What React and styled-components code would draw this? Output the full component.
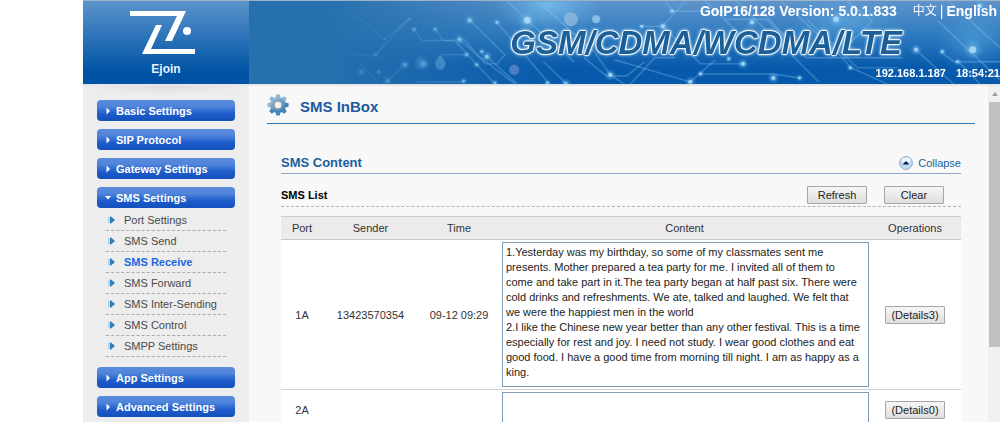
import React, {useState} from "react"
import styled, {createGlobalStyle, css} from 'styled-components';


const menu = [
    {name: 'Basic Settings'},
    {name: 'SIP Protocol'},
    {name: 'Gateway Settings'},
    {
        name: 'SMS Settings',
        items: ['Port Settings', 'SMS Send', 'SMS Receive', 'SMS Forward', 'SMS Inter-Sending', 'SMS Control', 'SMPP Settings']
    },
    {name: 'App Settings'},
    {name: 'Advanced Settings'},
]

const inbox = [
    {
        port: '1A',
        sender: '13423570354',
        time: '09-12 09:29',
        count: 3,
        content: '1.Yesterday was my birthday, so some of my classmates sent me presents. Mother prepared a tea party for me. I invited all of them to come and take part in it.The tea party began at half past six. There were cold drinks and refreshments. We ate, talked and laughed. We felt that we were the happiest men in the world\n2.I like the Chinese new year better than any other festival. This is a time especially for rest and joy. I need not study. I wear good clothes and eat good food. I have a good time from morning till night. I am as happy as a king.'
    },
    {port: '2A', sender: '', time: '', count: 0, content: ''},
]

// circuit lines of the banner
const traces = [
    'M110 10 L143 38 L168 17', 'M134 53 L143 43', 'M110 53 L134 53 L168 17',
    'M172 28 L180 39 L212 39 L252 82', 'M193 28 L201 39 L212 39', 'M217 38 L234 53 L272 82',
    'M227 19 L262 53 L254 62 L242 62 L222 38', 'M254 21 L306 82', 'M264 0 L284 19 L330 60',
    'M294 0 L350 50 L366 73 L380 82', 'M244 55 L274 82 M300 60 L323 82', 'M200 53 L224 53', 'M175 80 L222 80',
    'M145 80 L162 63', 'M118 62 L136 80', 'M340 56 L362 74 L382 74 L400 60', 'M396 25 L418 25 L440 0',
    'M420 0 L428 10 L480 10', 'M370 58 L445 80 L470 58', 'M418 25 L455 62 L500 62', 'M454 72 L527 72 L553 76',
    'M460 0 L497 36 L530 36', 'M490 0 L540 48 L572 80', 'M515 10 L560 56 L655 56', 'M480 18 L520 18 L550 46',
    'M535 0 L590 50 L604 66 L640 82', 'M600 0 L625 20 L600 44', 'M560 18 L610 66 L650 66', 'M668 48 L705 82',
    'M692 50 L706 60 L751 60', 'M690 20 L751 78', 'M700 0 L751 46', 'M710 60 L731 82', 'M386 82 L410 56 L430 56',
]

const nodes = [
    [134, 53, 2], [168, 18, 1], [143, 38, 1], [172, 28, 2], [193, 28, 2], [217, 38, 3], [227, 19, 3], [254, 21, 2],
    [284, 19, 5], [224, 53, 2], [234, 63, 2], [244, 55, 3], [239, 50, 2], [163, 63, 3], [181, 62, 4], [120, 70, 3],
    [146, 79, 3], [137, 70, 2], [221, 79, 2], [252, 81, 2], [304, 81, 2], [322, 82, 3], [366, 73, 3], [397, 25, 2],
    [418, 25, 3], [427, 10, 2], [445, 80, 3], [455, 72, 2], [497, 62, 3], [527, 76, 3], [553, 76, 2], [506, 21, 3],
    [589, 18, 4], [603, 66, 2], [668, 48, 3], [694, 50, 2], [724, 48, 5], [709, 60, 2], [731, 5, 3], [483, 57, 2],
]

const Circuit = () => (
    <CircuitSvg viewBox="0 0 751 82" preserveAspectRatio="xMaxYMid slice" aria-hidden="true">
        <defs>
            <linearGradient id="fade" x1="0" x2="1" y1="0" y2="0">
                <stop offset="0.1" stopColor="#fff" stopOpacity="0"/>
                <stop offset="0.36" stopColor="#fff" stopOpacity="1"/>
            </linearGradient>
            <mask id="fadeMask"><rect width="751" height="82" fill="url(#fade)"/></mask>
            <radialGradient id="glow">
                <stop offset="0" stopColor="#7fc9f5" stopOpacity="0.7"/>
                <stop offset="1" stopColor="#5fb4ea" stopOpacity="0"/>
            </radialGradient>
        </defs>
        <g mask="url(#fadeMask)">
            <ellipse cx="305" cy="4" rx="56" ry="30" fill="url(#glow)"/>
            <ellipse cx="600" cy="20" rx="60" ry="28" fill="url(#glow)" opacity="0.5"/>
            <ellipse cx="724" cy="40" rx="40" ry="34" fill="url(#glow)" opacity="0.5"/>
            <g fill="none" stroke="#8cc8f2" strokeOpacity="0.38" strokeWidth="1.4">
                {traces.map(d => <path key={d} d={d}/>)}
            </g>
            {nodes.map(([x, y, r]) => <g key={`${x}-${y}`}>
                <circle cx={x} cy={y} r={r * 2} fill="url(#glow)"/>
                <circle cx={x} cy={y} r={r * 0.7} fill="#b9e2fb" fillOpacity="0.75"/>
            </g>)}
            <circle cx="327" cy="18" r="7" fill="#a9cbe8" fillOpacity="0.55"/>
            <circle cx="352" cy="18" r="4" fill="#a9d5f2" fillOpacity="0.7"/>
            <path d="M198 52 C200 57 204 59 203 63 A5 5 0 0 1 193 63 C192 59 196 57 198 52Z" fill="#6fb0e4" fillOpacity="0.7"/>
            <path d="M178 52 C180 57 184 59 183 63 A5 5 0 0 1 173 63 C172 59 176 57 178 52Z" fill="#5fa2dc" fillOpacity="0.4"/>
            <circle cx="271" cy="68" r="5" fill="#8f9fdc" fillOpacity="0.5"/>
        </g>
    </CircuitSvg>
)

const Logo = () => (
    <svg width="72" height="46" viewBox="0 0 72 46" aria-hidden="true">
        <g fill="#fff">
            <path d="M0 1H56L42 31H35L47 6H0Z"/>
            <path d="M26 15H32L21 39H65V44H12Z"/>
            <circle cx="57" cy="21" r="4"/>
        </g>
    </svg>
)

const Gear = () => (
    <svg width="22" height="22" viewBox="0 0 22 22" aria-hidden="true">
        <defs>
            <linearGradient id="gear" x1="0" x2="0.6" y1="0" y2="1">
                <stop offset="0" stopColor="#a9c8de"/>
                <stop offset="0.5" stopColor="#6fa3c9"/>
                <stop offset="1" stopColor="#3f7fb4"/>
            </linearGradient>
        </defs>
        <g fill="url(#gear)">
            <circle cx="11" cy="11" r="8"/>
            {[0, 45, 90, 135, 180, 225, 270, 315].map(a =>
                <path key={a} d="M8.6 4 L9.2 0.4 H12.8 L13.4 4Z" fill={a > 80 && a < 230 ? '#4785b8' : '#8fb7d4'} transform={`rotate(${a} 11 11)`}/>
            )}
        </g>
        <circle cx="11" cy="11" r="4.6" fill="#8d9fae"/>
        <circle cx="11" cy="11" r="3.2" fill="#f4f4f2"/>
    </svg>
)

const Caret = ({open}) => (
    <svg width="6" height="8" viewBox="0 0 6 8" aria-hidden="true">
        <path d={open ? 'M0 2H6L3 5.5Z' : 'M1.5 0.5L5 4L1.5 7.5Z'} fill="#fff"/>
    </svg>
)

const Bullet = () => (
    <svg width="7" height="8" viewBox="0 0 7 8" aria-hidden="true">
        <path d="M0 1H1.6V7H0Z" fill="#a5cfe6"/>
        <path d="M2 0.5L3 0.5L7 4L3 7.5H2Z" fill="#2f7db5"/>
    </svg>
)

const CollapseIcon = ({open}) => (
    <svg width="14" height="14" viewBox="0 0 14 14" aria-hidden="true">
        <circle cx="7" cy="7" r="6.4" fill="#c3ddf3" stroke="#86abd2"/>
        <ellipse cx="7" cy="4" rx="4.5" ry="2.6" fill="#eef6fd"/>
        <path d={open ? 'M3.6 8.4L7 5L10.4 8.4Z' : 'M3.6 5.4L7 8.8L10.4 5.4Z'} fill="#0b1c5e"/>
    </svg>
)

const App = () => {
    const [opened, setOpened] = useState('SMS Settings')
    const [page, setPage] = useState('SMS Receive')
    const [show, setShow] = useState(true)
    const [messages, setMessages] = useState(inbox)

    const clearAll = () => {
        setMessages(messages.map(m => ({...m, sender: '', time: '', content: '', count: 0})))
    }

    return (
        <Page>
            <GlobalStyle/>
            <Header>
                <Brand>
                    <Logo/>
                    <BrandName>Ejoin</BrandName>
                </Brand>
                <Banner>
                    <Circuit/>
                    <TopLine>
                        <span>GoIP16/128 Version: 5.0.1.833</span>
                        <Languages>
                            <Lang href="#zh" $cjk>中文</Lang>
                            <Divider>|</Divider>
                            <Lang href="#en">English</Lang>
                        </Languages>
                    </TopLine>
                    <Slogan>GSM/CDMA/WCDMA/LTE</Slogan>
                    <Status>
                        <span>192.168.1.187</span>
                        <span>18:54:21</span>
                    </Status>
                </Banner>
            </Header>
            <Body>
                <Sidebar>
                    {menu.map(group => <Group key={group.name}>
                        <GroupButton onClick={() => setOpened(opened === group.name ? '' : group.name)}>
                            <Caret open={opened === group.name}/>
                            {group.name}
                        </GroupButton>
                        {opened === group.name && group.items && <SubMenu>
                            {group.items.map(item => <SubItem key={item}>
                                <Bullet/>
                                <SubLink href="#" $active={page === item} onClick={() => setPage(item)}>{item}</SubLink>
                            </SubItem>)}
                        </SubMenu>}
                    </Group>)}
                </Sidebar>
                <Main>
                    <TitleBar>
                        <Gear/>
                        <Title>SMS InBox</Title>
                    </TitleBar>
                    <Section>
                        <SectionHead>
                            <SectionTitle>SMS Content</SectionTitle>
                            <CollapseButton onClick={() => setShow(!show)}>
                                <CollapseIcon open={show}/>
                                {show ? 'Collapse' : 'Expand'}
                            </CollapseButton>
                        </SectionHead>
                        {show && <>
                            <ListHead>
                                <ListTitle>SMS List</ListTitle>
                                <Actions>
                                    <Button>Refresh</Button>
                                    <Button onClick={clearAll}>Clear</Button>
                                </Actions>
                            </ListHead>
                            <Table>
                                <thead>
                                    <tr>
                                        <Th $width="42px">Port</Th>
                                        <Th $width="95px">Sender</Th>
                                        <Th $width="82px">Time</Th>
                                        <Th>Content</Th>
                                        <Th $width="92px">Operations</Th>
                                    </tr>
                                </thead>
                                <tbody>
                                    {messages.map(m => <tr key={m.port}>
                                        <Td>{m.port}</Td>
                                        <Td>{m.sender}</Td>
                                        <Td>{m.time}</Td>
                                        <Td $indent>
                                            <Message readOnly aria-label={`Content ${m.port}`} value={m.content} $empty={!m.content}/>
                                        </Td>
                                        <Td><Button>(Details{m.count})</Button></Td>
                                    </tr>)}
                                </tbody>
                            </Table>
                        </>}
                    </Section>
                </Main>
                <Scroll>
                    <ScrollArrow>
                        <svg width="6" height="4" viewBox="0 0 6 4" aria-hidden="true"><path d="M0 4L3 0L6 4Z" fill="#a0a0a0"/></svg>
                    </ScrollArrow>
                    <Thumb/>
                </Scroll>
            </Body>
        </Page>
    )
}

const GlobalStyle = createGlobalStyle`
  * {
    box-sizing: border-box;
  }
  body {
    margin: 0;
    background: #fff;
    color: #333;
    font-family: "Liberation Sans", Arial, sans-serif;
    font-size: 11px;
  }
  button, textarea {
    font: inherit;
  }
`
const Page = styled.div`
  display: flex;
  flex-direction: column;
  height: 100vh;
  padding-left: 83px;
  overflow: hidden;
`
const Header = styled.header`
  display: flex;
  flex-shrink: 0;
  border-top: 1px solid #9db4c8;
  border-bottom: 2px solid #e6e6e6;
`
const Brand = styled.div`
  display: flex;
  flex-direction: column;
  align-items: center;
  width: 166px;
  padding-top: 9px;
  background: linear-gradient(#5c93ca, #2a72b8 45%, #0053a4 85%);
`
const BrandName = styled.span`
  margin-top: 6px;
  color: #e4f2ff;
  font-size: 12px;
  font-weight: bold;
  line-height: 14px;
`
const Banner = styled.div`
  position: relative;
  display: flex;
  flex: 1;
  flex-direction: column;
  align-items: flex-end;
  justify-content: space-between;
  height: 83px;
  padding: 1px 0 4px;
  overflow: hidden;
  background:
    linear-gradient(90deg, #2670ae 10%, rgba(38, 112, 174, 0) 42%),
    linear-gradient(#5f94cc, #2e7bc0 40%, #0759ab 80%);
  color: #fff;
  font-weight: bold;
`
const CircuitSvg = styled.svg`
  position: absolute;
  inset: 0;
  width: 100%;
  height: 100%;
`
const TopLine = styled.div`
  position: relative;
  display: flex;
  gap: 16px;
  padding-right: 3px;
  font-size: 14px;
  line-height: 18px;
`
const Languages = styled.div`
  display: flex;
  gap: 3px;
`
const Lang = styled.a`
  color: #fff;
  text-decoration: none;
  ${({$cjk}) => $cjk && css`
    font-family: "Liberation Sans", "Noto Sans CJK SC", sans-serif;
    font-size: 12px;
    font-weight: normal;
  `}
`
const Divider = styled.span`
  font-weight: normal;
`
const Slogan = styled.div`
  position: relative;
  padding-right: 98px;
  color: #1b5f99;
  font-size: 33px;
  font-style: italic;
  line-height: 32px;
  text-shadow: 1px 0 1px #fff, -1px 0 1px #fff, 0 1px 1px #fff, 0 -1px 1px #fff, 0 0 3px #e2f3ff, 0 0 4px #c8e6fb;
`
const Status = styled.div`
  position: relative;
  display: flex;
  gap: 10px;
  line-height: 14px;
`
const Body = styled.div`
  display: flex;
  flex: 1;
  min-height: 0;
`
const Sidebar = styled.nav`
  width: 166px;
  padding: 14px 14px 0;
  background: radial-gradient(ellipse 80px 8px at 50% 0, #dcdcdc, #ededed) #ededed;
`
const Group = styled.div`
  margin-bottom: 8px;
`
const GroupButton = styled.button`
  display: flex;
  align-items: center;
  gap: 5px;
  width: 100%;
  height: 21px;
  padding: 0 8px;
  border: 0;
  border-radius: 4px;
  background: linear-gradient(#5a8ade, #5085da 30%, #1d5ccb 65%, #1350bc);
  color: #fff;
  font-weight: bold;
`
const SubMenu = styled.ul`
  margin: 0;
  padding: 2px 9px;
  list-style: none;
`
const SubItem = styled.li`
  display: flex;
  align-items: center;
  gap: 9px;
  height: 21px;
  padding-left: 2px;
  border-bottom: 1px dashed #aaa;
`
const SubLink = styled.a`
  color: ${({$active}) => $active ? '#1c66e0' : '#4a4a4a'};
  font-weight: ${({$active}) => $active ? 'bold' : 'normal'};
  text-decoration: none;
`
const Main = styled.main`
  flex: 1;
  min-width: 0;
  padding: 0 11px 0 18px;
  overflow: hidden;
  background: #f8f8f8;
`
const TitleBar = styled.div`
  display: flex;
  align-items: center;
  gap: 11px;
  height: 38px;
  border-bottom: 1px solid #2a78b4;
`
const Title = styled.h1`
  margin: 0;
  padding-top: 4px;
  color: #1b5a9e;
  font-size: 15px;
`
const Section = styled.section`
  padding: 28px 14px 0;
`
const SectionHead = styled.div`
  display: flex;
  align-items: center;
  justify-content: space-between;
  height: 22px;
  border-bottom: 1px solid #8fa6c6;
`
const SectionTitle = styled.h2`
  margin: 0;
  color: #1b5f9f;
  font-size: 13px;
`
const CollapseButton = styled.button`
  display: flex;
  align-items: center;
  gap: 5px;
  padding: 0;
  border: 0;
  background: none;
  color: #1b5f9f;
`
const ListHead = styled.div`
  display: flex;
  align-items: center;
  justify-content: space-between;
  height: 33px;
  padding-top: 9px;
  border-bottom: 1px dashed #b4b4b4;
`
const ListTitle = styled.h3`
  margin: 0;
  color: #000;
  font-size: 11px;
`
const Actions = styled.div`
  display: flex;
  gap: 17px;
  padding-right: 17px;
`
const Button = styled.button`
  width: 60px;
  height: 18px;
  padding: 0;
  border: 1px solid #a6a6a6;
  border-radius: 1px;
  background: linear-gradient(#f6f6f6, #dedede);
  color: #222;
`
const Table = styled.table`
  width: 100%;
  margin-top: 9px;
  border-collapse: collapse;
  table-layout: fixed;
  background: #fff;
  color: #333;
`
const Th = styled.th`
  width: ${({$width}) => $width || 'auto'};
  height: 23px;
  padding: 0;
  border-top: 1px solid #ccc;
  border-bottom: 1px solid #c8c8c8;
  background: #ebebeb;
  font-weight: normal;
`
const Td = styled.td`
  padding: 2px 0 2px ${({$indent}) => $indent ? '2px' : '0'};
  border-bottom: 1px solid #cdd2d6;
  text-align: center;
`
const Message = styled.textarea`
  display: block;
  width: 100%;
  height: ${({$empty}) => $empty ? '36px' : '145px'};
  padding: 2px 7px 2px 3px;
  border: 1px solid #7f9db9;
  overflow: hidden;
  resize: none;
  background: #fff;
  color: #222;
  line-height: 15px;
`
const Scroll = styled.div`
  width: 14px;
  padding-left: 3px;
  background: linear-gradient(90deg, #f8f8f8 2px, #f0f0f0 2px);
`
const ScrollArrow = styled.div`
  display: flex;
  align-items: center;
  justify-content: center;
  height: 16px;
`
const Thumb = styled.div`
  height: 73%;
  background: #c1c1c1;
`
export default App;
